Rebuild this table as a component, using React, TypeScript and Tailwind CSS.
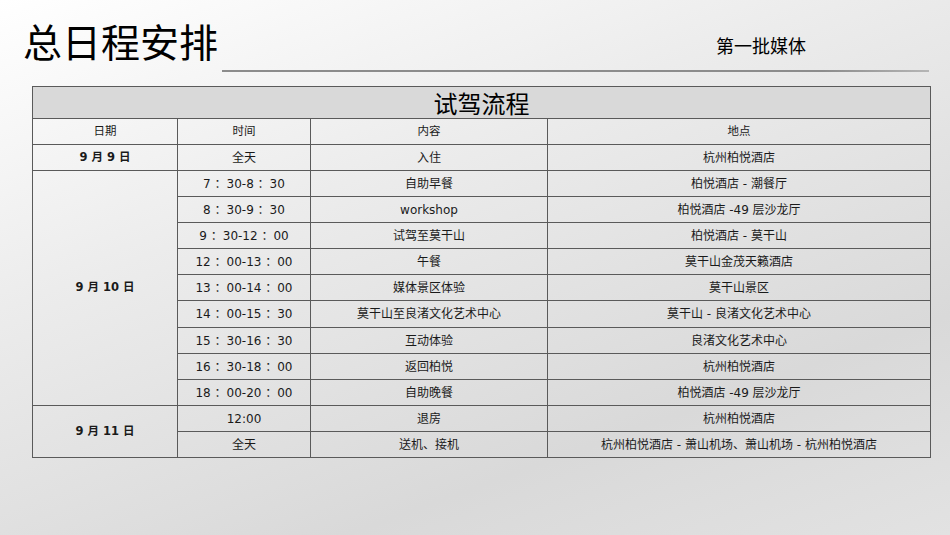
import React from "react";

type Row = { date?: { text: string; span: number }; time: string; content: string; place: string };

const rows: Row[] = [
  { date: { text: "9 月 9 日", span: 1 }, time: "全天", content: "入住", place: "杭州柏悦酒店" },
  { date: { text: "9 月 10 日", span: 9 }, time: "7 ：30-8 ：30", content: "自助早餐", place: "柏悦酒店 - 潮餐厅" },
  { time: "8 ：30-9 ：30", content: "workshop", place: "柏悦酒店 -49 层沙龙厅" },
  { time: "9 ：30-12 ：00", content: "试驾至莫干山", place: "柏悦酒店 - 莫干山" },
  { time: "12 ：00-13 ：00", content: "午餐", place: "莫干山金茂天籁酒店" },
  { time: "13 ：00-14 ：00", content: "媒体景区体验", place: "莫干山景区" },
  { time: "14 ：00-15 ：30", content: "莫干山至良渚文化艺术中心", place: "莫干山 - 良渚文化艺术中心" },
  { time: "15 ：30-16 ：30", content: "互动体验", place: "良渚文化艺术中心" },
  { time: "16 ：30-18 ：00", content: "返回柏悦", place: "杭州柏悦酒店" },
  { time: "18 ：00-20 ：00", content: "自助晚餐", place: "柏悦酒店 -49 层沙龙厅" },
  { date: { text: "9 月 11 日", span: 2 }, time: "12:00", content: "退房", place: "杭州柏悦酒店" },
  { time: "全天", content: "送机、接机", place: "杭州柏悦酒店 - 萧山机场、萧山机场 - 杭州柏悦酒店" },
];

const font = { fontFamily: '"DejaVu Sans", "Noto Sans CJK SC", sans-serif' };

export default function App() {
  return (
    <div
      className="w-[950px] h-[535px] overflow-hidden bg-[linear-gradient(160deg,#ffffff_0%,#ececec_35%,#d9d9d9_75%,#e2e2e2_100%)] text-[#1a1a1a]"
      style={font}
    >
      <div className="flex items-start h-[70px]">
        <h1 className="ml-[23px] mt-[18px] text-[39px] leading-[45px] font-normal text-black font-['Noto_Sans_CJK_SC',sans-serif]">
          总日程安排
        </h1>
        <div className="ml-auto mr-[144px] mt-[34px] text-[18px] leading-[22px] text-black font-['Noto_Sans_CJK_SC',sans-serif]">
          第一批媒体
        </div>
      </div>
      <div className="ml-[222px] w-[707px] h-[2px] bg-[linear-gradient(90deg,#8c8c8c,#8c8c8c_85%,#b5b5b5)]" />
      <table className="ml-[32px] mt-[14px] w-[898px] table-fixed border-collapse text-[12px]">
        <colgroup>
          <col className="w-[145px]" />
          <col className="w-[133px]" />
          <col className="w-[237px]" />
          <col className="w-[383px]" />
        </colgroup>
        <tbody>
          <tr className="h-[32px]">
            <td colSpan={4} className="border border-[#5a5a5a] bg-[#d9d9d9] text-center text-[24px] leading-[30px] text-black font-['Noto_Sans_CJK_SC',sans-serif]">
              试驾流程
            </td>
          </tr>
          <tr className="h-[26px]">
            {["日期", "时间", "内容", "地点"].map((h) => (
              <td key={h} className="border border-[#5a5a5a] text-center text-[11.5px] leading-none p-0">
                {h}
              </td>
            ))}
          </tr>
          {rows.map((r, i) => (
            <tr key={i} className={i === 6 ? "h-[27px]" : "h-[26px]"}>
              {r.date && (
                <td rowSpan={r.date.span} className="border border-[#5a5a5a] text-center font-bold text-[11.5px] leading-none p-0">
                  {r.date.text}
                </td>
              )}
              <td className="border border-[#5a5a5a] text-center leading-none p-0 whitespace-nowrap">{r.time}</td>
              <td className="border border-[#5a5a5a] text-center leading-none p-0 whitespace-nowrap">{r.content}</td>
              <td className="border border-[#5a5a5a] text-center leading-none p-0 whitespace-nowrap">{r.place}</td>
            </tr>
          ))}
        </tbody>
      </table>
    </div>
  );
}
